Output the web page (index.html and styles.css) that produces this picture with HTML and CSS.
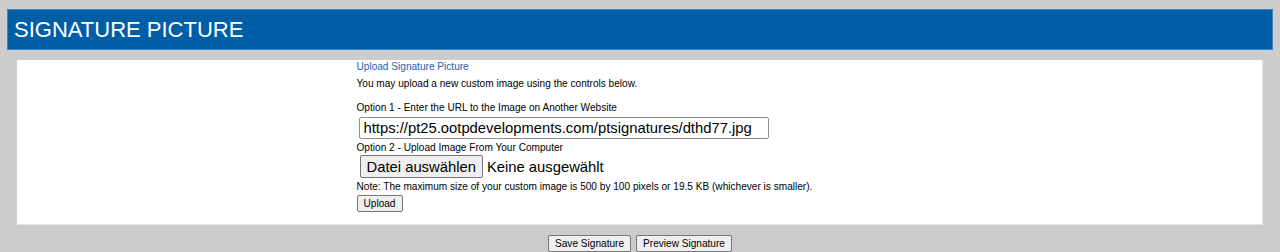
FILE: index.html
```html
<!DOCTYPE html>
<html lang="en">
<head>
  <meta charset="UTF-8" />
  <title>Signature Picture</title>
  <link rel="stylesheet" href="styles.css">
</head>
<body>
  <div class="title-bar">SIGNATURE PICTURE</div>

  <div class="panel">
    <div class="upload-box">
      <div class="box-title">Upload Signature Picture</div>
      <p class="intro">You may upload a new custom image using the controls below.</p>

      <div class="label">Option 1 - Enter the URL to the Image on Another Website</div>
      <input class="url-input" type="text" value="https://pt25.ootpdevelopments.com/ptsignatures/dthd77.jpg" />

      <div class="label">Option 2 - Upload Image From Your Computer</div>
      <div class="file-row">
        <button class="file-btn">Datei auswählen</button>
        <span class="file-name">Keine ausgewählt</span>
      </div>

      <div class="note">Note: The maximum size of your custom image is 500 by 100 pixels or 19.5 KB (whichever is smaller).</div>
      <button class="small-btn">Upload</button>
    </div>
  </div>

  <!-- Speichern / Vorschau -->
  <div class="actions">
    <button class="small-btn">Save Signature</button>
    <button class="small-btn">Preview Signature</button>
  </div>
</body>
</html>
```

FILE: styles.css
```css
body {
  margin: 0;
  padding: 9px 7px 0;
  background: #cccccc;
  font-family: "Liberation Sans", Arial, sans-serif;
  font-size: 10.1px;
  color: #000;
}
.title-bar {
  height: 39px;
  line-height: 39px;
  padding-left: 6px;
  background: #005ea6;
  border: 1px solid #3d82c2;
  color: #fff;
  font-size: 22px;
}
.panel {
  margin: 10px 10px 0;
  height: 164px;
  background: #fff;
  border-right: 1px solid #e6e6e6;
  border-bottom: 1px solid #e6e6e6;
}
.upload-box {
  width: 566px;
  margin: 0 auto;
}
.box-title {
  color: #1c64a8;
  line-height: 13px;
}
.intro {
  margin: 4px 0 0;
  line-height: 13px;
}
.label {
  line-height: 13px;
}
.intro + .label {
  margin-top: 11px;
}
.url-input {
  display: block;
  box-sizing: border-box;
  width: 410px;
  height: 22px;
  margin: 3px 0 2px 2px;
  padding: 0 2px 0 4px;
  border: 1px solid #8f8f8f;
  border-radius: 2px;
  font-family: "Liberation Sans", Arial, sans-serif;
  font-size: 14.8px;
  color: #000;
}
.file-row {
  display: flex;
  align-items: center;
  gap: 4px;
  margin: 1px 0 2px 3px;
  font-size: 14.8px;
}
.file-btn {
  height: 23px;
  padding: 0 6px;
  background: #efefef;
  border: 1px solid #767676;
  border-radius: 2px;
  font-family: "Liberation Sans", Arial, sans-serif;
  font-size: 14.8px;
  color: #000;
}
.note {
  line-height: 13px;
}
.small-btn {
  height: 17px;
  padding: 0 6px;
  margin-top: 2px;
  background: #efefef;
  border: 1px solid #767676;
  border-radius: 2px;
  font-family: "Liberation Sans", Arial, sans-serif;
  font-size: 10.1px;
  color: #000;
}
.actions {
  display: flex;
  justify-content: center;
  gap: 5px;
  margin-top: 10px;
}
.actions .small-btn {
  margin-top: 0;
}
```
